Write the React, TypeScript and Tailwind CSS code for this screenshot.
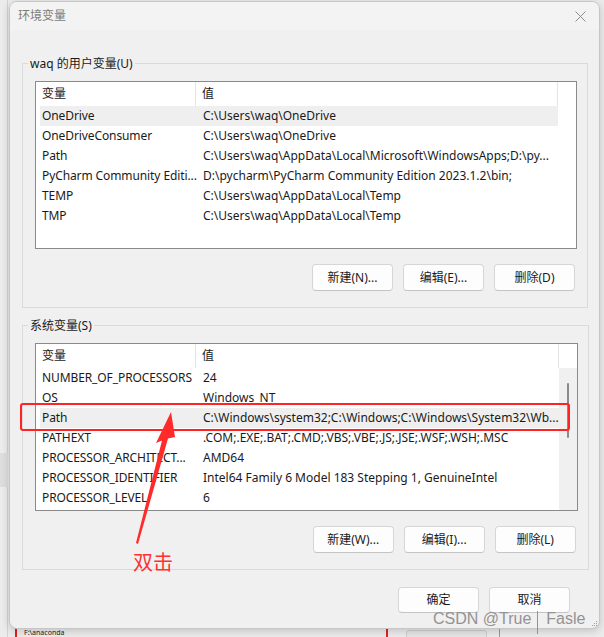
import React from "react";

const userRows: [string, string][] = [
  ["OneDrive", "C:\\Users\\waq\\OneDrive"],
  ["OneDriveConsumer", "C:\\Users\\waq\\OneDrive"],
  ["Path", "C:\\Users\\waq\\AppData\\Local\\Microsoft\\WindowsApps;D:\\py..."],
  ["PyCharm Community Editi...", "D:\\pycharm\\PyCharm Community Edition 2023.1.2\\bin;"],
  ["TEMP", "C:\\Users\\waq\\AppData\\Local\\Temp"],
  ["TMP", "C:\\Users\\waq\\AppData\\Local\\Temp"],
];

const sysRows: [string, string][] = [
  ["NUMBER_OF_PROCESSORS", "24"],
  ["OS", "Windows_NT"],
  ["Path", "C:\\Windows\\system32;C:\\Windows;C:\\Windows\\System32\\Wb..."],
  ["PATHEXT", ".COM;.EXE;.BAT;.CMD;.VBS;.VBE;.JS;.JSE;.WSF;.WSH;.MSC"],
  ["PROCESSOR_ARCHITECT...", "AMD64"],
  ["PROCESSOR_IDENTIFIER", "Intel64 Family 6 Model 183 Stepping 1, GenuineIntel"],
  ["PROCESSOR_LEVEL", "6"],
];

const FONT = { fontFamily: '"Noto Sans", "Noto Sans CJK SC", sans-serif' };

function ListView({
  rows,
  highlight,
  scroll,
}: {
  rows: [string, string][];
  highlight: number;
  scroll: boolean;
}) {
  return (
    <div className="flex h-[168px] border border-[#8a8a8a] bg-white">
      <div className="flex min-w-0 flex-1 flex-col">
        <div className="flex h-[24px] shrink-0 items-center text-[12px] text-[#1a1a1a]">
          <div className="flex h-full w-[160px] items-center border-r border-[#e5e5e5] pl-[6px]">变量</div>
          <div className="flex h-full flex-1 items-center border-r border-[#e5e5e5] pl-[6px]">值</div>
        </div>
        {rows.map(([k, v], i) => (
          <div
            key={k + i}
            className={
              "ml-[4px] flex h-[20px] shrink-0 items-center text-[12px] text-[#1a1a1a] " +
              (i === highlight ? "bg-[#efefef]" : "")
            }
          >
            <div className="w-[157px] shrink-0 whitespace-nowrap pl-[2px] tracking-[-0.1px]">{k}</div>
            <div className="min-w-0 flex-1 overflow-hidden whitespace-nowrap pl-[6px]">{v}</div>
          </div>
        ))}
      </div>
      <div className="flex w-[18px] flex-col">
        <div className="h-[24px] shrink-0 bg-white" />
        <div className={"flex flex-1 flex-col " + (scroll ? "bg-[#f0f0f0]" : "bg-white")}>
          {scroll && <div className="mx-auto mt-[15px] h-[55px] w-[2px] rounded-full bg-[#8a8a8a]" />}
        </div>
      </div>
    </div>
  );
}

function Btn({ children, h = "h-[27px]" }: { children: React.ReactNode; h?: string }) {
  return (
    <div
      className={
        "w-[81px] " +
        h +
        " flex items-center justify-center rounded-[4px] border border-[#d6d6d6] border-b-[#c4c4c4] bg-[#fdfdfd] text-[12px] text-[#1a1a1a]"
      }
    >
      {children}
    </div>
  );
}

function Group({
  label,
  rows,
  highlight,
  scroll,
  buttons,
  className,
}: {
  label: string;
  rows: [string, string][];
  highlight: number;
  scroll: boolean;
  buttons: string[];
  className: string;
}) {
  return (
    <fieldset className={"border border-[#dadada] px-0 " + className}>
      <legend className="ml-[5px] px-[2px] text-[12px] leading-[17px] text-[#1a1a1a]">{label}</legend>
      <div className="pb-[16px] pl-[12px] pr-[10px] pt-[9px]">
        <ListView rows={rows} highlight={highlight} scroll={scroll} />
        <div className="mt-[15px] flex justify-end gap-[10px] pr-[2px]">
          {buttons.map((b) => (
            <Btn key={b}>{b}</Btn>
          ))}
        </div>
      </div>
    </fieldset>
  );
}

export default function App() {
  return (
    <div className="relative h-[637px] w-[604px] overflow-hidden bg-[#ececec]" style={FONT}>
      {/* background desktop bits */}
      <div className="absolute left-[7px] top-0 h-[637px] w-[1px] bg-[#d4d4d4]" />
      <div className="absolute left-0 top-[453px] h-[34px] w-[8px] bg-[#dedede]" />
      <div className="absolute left-[15px] top-[628px] h-[9px] w-[2px] bg-[#e02020]" />
      <div className="absolute left-[24px] top-[629px] text-[7px] leading-[8px] text-[#222]">F:\anaconda</div>
      <div className="absolute left-[386px] top-[628px] h-[9px] w-[2px] bg-[#e02020]" />
      <div className="absolute left-[406px] top-[630px] h-[10px] w-[81px] rounded-t-[3px] border border-[#cfcfcf] bg-[#e6e6e6]" />
      <div className="absolute left-[499px] top-[628px] h-[9px] w-[1px] bg-[#9a9a9a]" />

      {/* dialog window */}
      <div className="absolute left-[9px] top-[1px] flex h-[628px] w-[591px] flex-col overflow-hidden rounded-[8px] border border-[#c6c6c6] bg-[#f0f0f0] shadow-[0_2px_8px_rgba(0,0,0,0.18)]">
        <div className="flex h-[28px] shrink-0 items-center justify-between bg-[#f3f3f3] pl-[8px] pr-[13px]">
          <span className="text-[12px] text-[#7c7c7c]">环境变量</span>
          <svg width="11" height="11" viewBox="0 0 11 11">
            <path d="M0.5 0.5 L10.5 10.5 M10.5 0.5 L0.5 10.5" stroke="#8c8c8c" strokeWidth="1" fill="none" />
          </svg>
        </div>
        <div className="flex flex-1 flex-col pl-[12px] pr-[11px]">
          <Group
            className="mt-[25px]"
            label="waq 的用户变量(U)"
            rows={userRows}
            highlight={0}
            scroll={false}
            buttons={["新建(N)...", "编辑(E)...", "删除(D)"]}
          />
          <Group
            className="mt-[9px]"
            label="系统变量(S)"
            rows={sysRows}
            highlight={2}
            scroll={true}
            buttons={["新建(W)...", "编辑(I)...", "删除(L)"]}
          />
          <div className="mt-[17px] flex justify-end gap-[10px] pr-[18px]">
            <Btn h="h-[26px]">确定</Btn>
            <Btn h="h-[26px]">取消</Btn>
          </div>
        </div>
        {/* resize grip */}
        <div className="absolute bottom-[2px] right-[2px] grid grid-cols-3 gap-[1px]">
          <span className="h-[1px] w-[1px]" />
          <span className="h-[1px] w-[1px]" />
          <span className="h-[1px] w-[1px] bg-[#a0a0a0]" />
          <span className="h-[1px] w-[1px]" />
          <span className="h-[1px] w-[1px] bg-[#a0a0a0]" />
          <span className="h-[1px] w-[1px] bg-[#a0a0a0]" />
          <span className="h-[1px] w-[1px] bg-[#a0a0a0]" />
          <span className="h-[1px] w-[1px] bg-[#a0a0a0]" />
          <span className="h-[1px] w-[1px] bg-[#a0a0a0]" />
        </div>
      </div>

      {/* annotations */}
      <div className="absolute left-[20px] top-[403px] h-[28px] w-[550px] rounded-[3px] border-2 border-[#ff2424]" />
      <svg className="absolute left-0 top-0" width="604" height="637" viewBox="0 0 604 637">
        <polygon
          points="171,412 175,437 168,438.5 138,544 136,543 162,440.5 156,443"
          fill="#ff2a2a"
        />
      </svg>
      <div
        className="absolute left-[133px] top-[549px] text-[20px] leading-[26px] text-[#ff3030]"
        style={{ fontFamily: '"Noto Sans CJK SC", sans-serif' }}
      >
        双击
      </div>
      <div
        className="absolute left-[433px] top-[607px] flex items-center text-[16px] leading-[20px] text-[#939393]"
        style={{ fontFamily: '"Liberation Sans", sans-serif' }}
      >
        <span>CSDN @True</span>
        <span className="ml-[6px] mr-[8px] h-[23px] w-[1px] translate-y-[4px] bg-[#939393]" />
        <span>Fasle</span>
      </div>
    </div>
  );
}
